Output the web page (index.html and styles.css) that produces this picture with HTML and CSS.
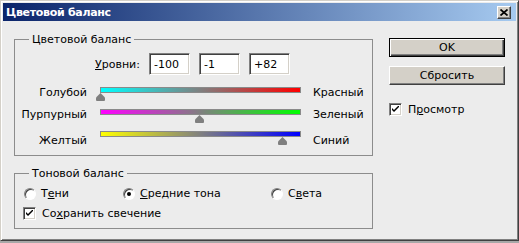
FILE: index.html
```html
<!DOCTYPE html>
<html lang="ru">
<head>
    <meta charset="UTF-8">
    <meta name="viewport" content="width=device-width, initial-scale=1.0">
    <title>Цветовой баланс</title>
    <link rel="stylesheet" href="styles.css">
</head>
<body>

    <div class="window">
        <div class="titlebar">
            <span class="title">Цветовой баланс</span>
            <span class="close">
                <svg width="8" height="7" viewBox="0 0 8 7"><path d="M0.5 0.5 L7.5 6.5 M7.5 0.5 L0.5 6.5" stroke="#000" stroke-width="1.7" fill="none"/></svg>
            </span>
        </div>

        <div class="content">
            <div class="left">
                <fieldset class="group group-color">
                    <legend>Цветовой баланс</legend>

                    <div class="levels">
                        <span class="levels-label"><u>У</u>ровни:</span>
                        <input class="field" type="text" value="-100" readonly>
                        <input class="field" type="text" value="-1" readonly>
                        <input class="field" type="text" value="+82" readonly>
                    </div>

                    <!-- thumb left = value + 100 (bar is 200px wide) -->
                    <div class="sliders">
                        <div class="slider-row">
                            <span class="lbl-left">Голубой</span>
                            <div class="track">
                                <div class="bar bar-cr"></div>
                                <svg class="thumb" style="left: 0px" width="9" height="8" viewBox="0 0 9 8"><path d="M4.5 0 L8.5 4 Q9 4.5 9 5.5 L9 7 Q9 8 8 8 L1 8 Q0 8 0 7 L0 5.5 Q0 4.5 0.5 4 Z" fill="#7f7f7f"/></svg>
                            </div>
                            <span class="lbl-right">Красный</span>
                        </div>
                        <div class="slider-row">
                            <span class="lbl-left">Пурпурный</span>
                            <div class="track">
                                <div class="bar bar-mg"></div>
                                <svg class="thumb" style="left: 99px" width="9" height="8" viewBox="0 0 9 8"><path d="M4.5 0 L8.5 4 Q9 4.5 9 5.5 L9 7 Q9 8 8 8 L1 8 Q0 8 0 7 L0 5.5 Q0 4.5 0.5 4 Z" fill="#7f7f7f"/></svg>
                            </div>
                            <span class="lbl-right">Зеленый</span>
                        </div>
                        <div class="slider-row slider-row-low">
                            <span class="lbl-left">Желтый</span>
                            <div class="track">
                                <div class="bar bar-yb"></div>
                                <svg class="thumb" style="left: 182px" width="9" height="8" viewBox="0 0 9 8"><path d="M4.5 0 L8.5 4 Q9 4.5 9 5.5 L9 7 Q9 8 8 8 L1 8 Q0 8 0 7 L0 5.5 Q0 4.5 0.5 4 Z" fill="#7f7f7f"/></svg>
                            </div>
                            <span class="lbl-right">Синий</span>
                        </div>
                    </div>
                </fieldset>

                <fieldset class="group group-tone">
                    <legend>Тоновой баланс</legend>

                    <div class="radios">
                        <span class="option"><span class="radio"></span>Т<u>е</u>ни</span>
                        <span class="option"><span class="radio checked"></span><u>С</u>редние тона</span>
                        <span class="option"><span class="radio"></span>С<u>в</u>ета</span>
                    </div>
                    <div class="option check-row">
                        <span class="checkbox">
                            <svg width="7" height="7" viewBox="0 0 7 7"><path d="M0 2 L0 4 L2 6 L7 1 L7 -1 L2 4 Z" fill="#000"/></svg>
                        </span>Со<u>х</u>ранить свечение
                    </div>
                </fieldset>
            </div>

            <div class="right">
                <div class="btn btn-default">OK</div>
                <div class="btn">Сбросить</div>
                <div class="option preview">
                    <span class="checkbox">
                        <svg width="7" height="7" viewBox="0 0 7 7"><path d="M0 2 L0 4 L2 6 L7 1 L7 -1 L2 4 Z" fill="#000"/></svg>
                    </span>П<u>р</u>осмотр
                </div>
            </div>
        </div>
    </div>

</body>
</html>
```

FILE: styles.css
```css
html {
    background-color: #a8a8a8;
}
body {
    margin: 0;
    font-family: "DejaVu Sans", sans-serif;
    font-size: 11px;
    line-height: 13px;
    color: #000;
}
.window {
    box-sizing: border-box;
    width: 519px;
    height: 241px;
    padding: 2px;
    background-color: #ececec;
    border: 1px solid;
    border-color: #d4d0c8 #404040 #404040 #d4d0c8;
    box-shadow: inset 1px 1px #fff, inset -1px -1px #808080;
}
.titlebar {
    height: 18px;
    display: flex;
    align-items: center;
    justify-content: space-between;
    padding: 0 5px 0 3px;
    background: linear-gradient(to right, #0a246a, #a6caf0);
}
.title {
    color: #fff;
    font-weight: bold;
    letter-spacing: -0.3px;
}
.close {
    box-sizing: border-box;
    width: 14px;
    height: 13px;
    display: flex;
    align-items: center;
    justify-content: center;
    background-color: #d4d0c8;
    border: 1px solid;
    border-color: #fff #404040 #404040 #fff;
    box-shadow: inset -1px -1px #808080;
}
.content {
    display: flex;
    padding-left: 11px;
}
.left {
    width: 359px;
}
.group {
    margin: 0;
    padding: 0;
    min-width: 0;
    border: 1px solid #8c8c8c;
}
.group legend {
    margin-left: 14px;
    padding: 0 3px;
    line-height: 13px;
}
.group-color {
    margin-top: 12px;
    padding-bottom: 5px;
}
.group-tone {
    margin-top: 11px;
    padding-bottom: 8px;
}

/* levels */
.levels {
    display: flex;
    align-items: center;
    margin-top: 7px;
    margin-left: 80px;
}
.levels-label {
    width: 54px;
}
.field {
    box-sizing: border-box;
    width: 41px;
    height: 22px;
    margin: 0 9px 0 0;
    padding: 0 0 0 4px;
    font-family: inherit;
    font-size: 11px;
    color: #000;
    background: #fff;
    border: 1px solid;
    border-color: #808080 #fff #fff #808080;
    box-shadow: inset 1px 1px #404040, inset -1px -1px #d4d0c8;
    outline: none;
}

/* sliders */
.sliders {
    margin-top: 9px;
}
.slider-row {
    display: grid;
    grid-template-columns: 72px 200px auto;
    column-gap: 13px;
    height: 22px;
}
.lbl-left {
    text-align: right;
    margin-top: 2px;
}
.lbl-right {
    margin-top: 2px;
}
.slider-row-low .lbl-left,
.slider-row-low .lbl-right {
    margin-top: 6px;
}
.track {
    position: relative;
    margin-top: 3px;
}
.bar {
    box-sizing: border-box;
    width: 201px;
    height: 6px;
    border: 1px solid #8a8a8a;
}
.bar-cr {
    background: linear-gradient(to right, #00ffff, #ff0000);
}
.bar-mg {
    background: linear-gradient(to right, #ff00ff, #00ff00);
}
.bar-yb {
    background: linear-gradient(to right, #ffff00, #0000ff);
}
.thumb {
    position: absolute;
    top: 6px;
    margin-left: -4px;
}

/* radios and checkboxes */
.radios {
    display: grid;
    grid-template-columns: 99px 148px auto;
    margin-top: 7px;
    padding-left: 9px;
}
.option {
    display: flex;
    align-items: center;
}
.radio {
    box-sizing: border-box;
    width: 12px;
    height: 12px;
    margin-right: 5px;
    border-radius: 50%;
    background: #fff;
    border: 1px solid;
    border-color: #808080 #fff #fff #808080;
    box-shadow: inset 1px 1px #404040;
    display: flex;
    align-items: center;
    justify-content: center;
}
.radio.checked::after {
    content: "";
    width: 4px;
    height: 4px;
    border-radius: 50%;
    background: #000;
}
.checkbox {
    box-sizing: border-box;
    width: 13px;
    height: 13px;
    margin-right: 6px;
    background: #fff;
    border: 1px solid;
    border-color: #808080 #fff #fff #808080;
    box-shadow: inset 1px 1px #404040, inset -1px -1px #d4d0c8;
    display: flex;
    align-items: center;
    justify-content: center;
}
.check-row {
    margin-top: 7px;
    padding-left: 8px;
}

/* right column */
.right {
    width: 116px;
    margin-left: 16px;
}
.btn {
    box-sizing: border-box;
    height: 19px;
    line-height: 17px;
    text-align: center;
    background-color: #d4d0c8;
    border: 1px solid;
    border-color: #fff #404040 #404040 #fff;
    box-shadow: inset -1px -1px #808080;
    margin-top: 9px;
}
.btn-default {
    margin-top: 17px;
    border-color: #000;
    box-shadow: inset 1px 1px #fff, inset -1px -1px #404040, inset -2px -2px #808080;
}
.preview {
    margin-top: 18px;
}
```
